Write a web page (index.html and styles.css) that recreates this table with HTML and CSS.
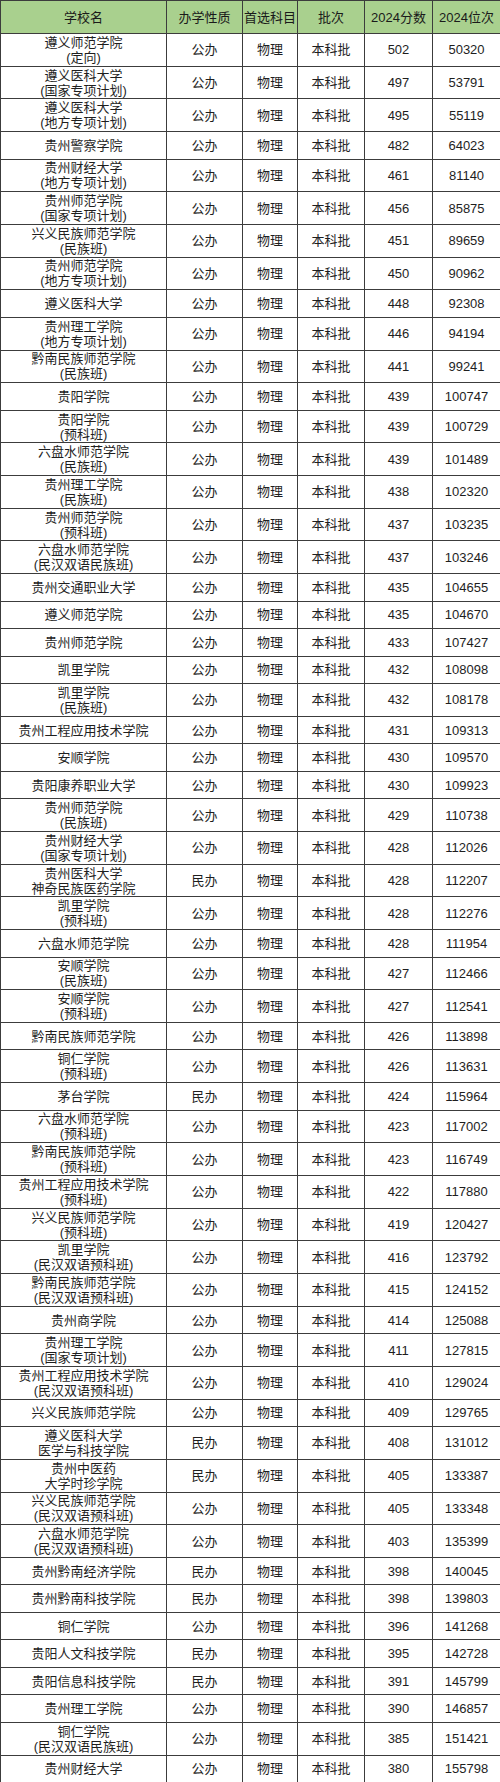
FILE: index.html
```html
<!DOCTYPE html>
<html lang="zh-CN">
<head>
<meta charset="utf-8">
<title>贵州本科批物理类院校分数位次</title>
<link rel="stylesheet" href="styles.css">
</head>
<body>
<table class="score-table">
<colgroup>
<col class="c-name"><col class="c-type"><col class="c-subj"><col class="c-batch"><col class="c-score"><col class="c-rank">
</colgroup>
<thead>
<tr class="head"><th>学校名</th><th>办学性质</th><th>首选科目</th><th>批次</th><th>2024分数</th><th>2024位次</th></tr>
</thead>
<tbody>
<tr class="d"><td>遵义师范学院<br>(定向)</td><td>公办</td><td>物理</td><td>本科批</td><td>502</td><td>50320</td></tr>
<tr class="d"><td>遵义医科大学<br>(国家专项计划)</td><td>公办</td><td>物理</td><td>本科批</td><td>497</td><td>53791</td></tr>
<tr class="d"><td>遵义医科大学<br>(地方专项计划)</td><td>公办</td><td>物理</td><td>本科批</td><td>495</td><td>55119</td></tr>
<tr class="s"><td>贵州警察学院</td><td>公办</td><td>物理</td><td>本科批</td><td>482</td><td>64023</td></tr>
<tr class="d"><td>贵州财经大学<br>(地方专项计划)</td><td>公办</td><td>物理</td><td>本科批</td><td>461</td><td>81140</td></tr>
<tr class="d"><td>贵州师范学院<br>(国家专项计划)</td><td>公办</td><td>物理</td><td>本科批</td><td>456</td><td>85875</td></tr>
<tr class="d"><td>兴义民族师范学院<br>(民族班)</td><td>公办</td><td>物理</td><td>本科批</td><td>451</td><td>89659</td></tr>
<tr class="d"><td>贵州师范学院<br>(地方专项计划)</td><td>公办</td><td>物理</td><td>本科批</td><td>450</td><td>90962</td></tr>
<tr class="s"><td>遵义医科大学</td><td>公办</td><td>物理</td><td>本科批</td><td>448</td><td>92308</td></tr>
<tr class="d"><td>贵州理工学院<br>(地方专项计划)</td><td>公办</td><td>物理</td><td>本科批</td><td>446</td><td>94194</td></tr>
<tr class="d"><td>黔南民族师范学院<br>(民族班)</td><td>公办</td><td>物理</td><td>本科批</td><td>441</td><td>99241</td></tr>
<tr class="s"><td>贵阳学院</td><td>公办</td><td>物理</td><td>本科批</td><td>439</td><td>100747</td></tr>
<tr class="d"><td>贵阳学院<br>(预科班)</td><td>公办</td><td>物理</td><td>本科批</td><td>439</td><td>100729</td></tr>
<tr class="d"><td>六盘水师范学院<br>(民族班)</td><td>公办</td><td>物理</td><td>本科批</td><td>439</td><td>101489</td></tr>
<tr class="d"><td>贵州理工学院<br>(民族班)</td><td>公办</td><td>物理</td><td>本科批</td><td>438</td><td>102320</td></tr>
<tr class="d"><td>贵州师范学院<br>(预科班)</td><td>公办</td><td>物理</td><td>本科批</td><td>437</td><td>103235</td></tr>
<tr class="d"><td>六盘水师范学院<br>(民汉双语民族班)</td><td>公办</td><td>物理</td><td>本科批</td><td>437</td><td>103246</td></tr>
<tr class="s"><td>贵州交通职业大学</td><td>公办</td><td>物理</td><td>本科批</td><td>435</td><td>104655</td></tr>
<tr class="s"><td>遵义师范学院</td><td>公办</td><td>物理</td><td>本科批</td><td>435</td><td>104670</td></tr>
<tr class="s"><td>贵州师范学院</td><td>公办</td><td>物理</td><td>本科批</td><td>433</td><td>107427</td></tr>
<tr class="s"><td>凯里学院</td><td>公办</td><td>物理</td><td>本科批</td><td>432</td><td>108098</td></tr>
<tr class="d"><td>凯里学院<br>(民族班)</td><td>公办</td><td>物理</td><td>本科批</td><td>432</td><td>108178</td></tr>
<tr class="s"><td>贵州工程应用技术学院</td><td>公办</td><td>物理</td><td>本科批</td><td>431</td><td>109313</td></tr>
<tr class="s"><td>安顺学院</td><td>公办</td><td>物理</td><td>本科批</td><td>430</td><td>109570</td></tr>
<tr class="s"><td>贵阳康养职业大学</td><td>公办</td><td>物理</td><td>本科批</td><td>430</td><td>109923</td></tr>
<tr class="d"><td>贵州师范学院<br>(民族班)</td><td>公办</td><td>物理</td><td>本科批</td><td>429</td><td>110738</td></tr>
<tr class="d"><td>贵州财经大学<br>(国家专项计划)</td><td>公办</td><td>物理</td><td>本科批</td><td>428</td><td>112026</td></tr>
<tr class="d"><td>贵州医科大学<br>神奇民族医药学院</td><td>民办</td><td>物理</td><td>本科批</td><td>428</td><td>112207</td></tr>
<tr class="d"><td>凯里学院<br>(预科班)</td><td>公办</td><td>物理</td><td>本科批</td><td>428</td><td>112276</td></tr>
<tr class="s"><td>六盘水师范学院</td><td>公办</td><td>物理</td><td>本科批</td><td>428</td><td>111954</td></tr>
<tr class="d"><td>安顺学院<br>(民族班)</td><td>公办</td><td>物理</td><td>本科批</td><td>427</td><td>112466</td></tr>
<tr class="d"><td>安顺学院<br>(预科班)</td><td>公办</td><td>物理</td><td>本科批</td><td>427</td><td>112541</td></tr>
<tr class="s"><td>黔南民族师范学院</td><td>公办</td><td>物理</td><td>本科批</td><td>426</td><td>113898</td></tr>
<tr class="d"><td>铜仁学院<br>(预科班)</td><td>公办</td><td>物理</td><td>本科批</td><td>426</td><td>113631</td></tr>
<tr class="s"><td>茅台学院</td><td>民办</td><td>物理</td><td>本科批</td><td>424</td><td>115964</td></tr>
<tr class="d"><td>六盘水师范学院<br>(预科班)</td><td>公办</td><td>物理</td><td>本科批</td><td>423</td><td>117002</td></tr>
<tr class="d"><td>黔南民族师范学院<br>(预科班)</td><td>公办</td><td>物理</td><td>本科批</td><td>423</td><td>116749</td></tr>
<tr class="d"><td>贵州工程应用技术学院<br>(预科班)</td><td>公办</td><td>物理</td><td>本科批</td><td>422</td><td>117880</td></tr>
<tr class="d"><td>兴义民族师范学院<br>(预科班)</td><td>公办</td><td>物理</td><td>本科批</td><td>419</td><td>120427</td></tr>
<tr class="d"><td>凯里学院<br>(民汉双语预科班)</td><td>公办</td><td>物理</td><td>本科批</td><td>416</td><td>123792</td></tr>
<tr class="d"><td>黔南民族师范学院<br>(民汉双语预科班)</td><td>公办</td><td>物理</td><td>本科批</td><td>415</td><td>124152</td></tr>
<tr class="s"><td>贵州商学院</td><td>公办</td><td>物理</td><td>本科批</td><td>414</td><td>125088</td></tr>
<tr class="d"><td>贵州理工学院<br>(国家专项计划)</td><td>公办</td><td>物理</td><td>本科批</td><td>411</td><td>127815</td></tr>
<tr class="d"><td>贵州工程应用技术学院<br>(民汉双语预科班)</td><td>公办</td><td>物理</td><td>本科批</td><td>410</td><td>129024</td></tr>
<tr class="s"><td>兴义民族师范学院</td><td>公办</td><td>物理</td><td>本科批</td><td>409</td><td>129765</td></tr>
<tr class="d"><td>遵义医科大学<br>医学与科技学院</td><td>民办</td><td>物理</td><td>本科批</td><td>408</td><td>131012</td></tr>
<tr class="d"><td>贵州中医药<br>大学时珍学院</td><td>民办</td><td>物理</td><td>本科批</td><td>405</td><td>133387</td></tr>
<tr class="d"><td>兴义民族师范学院<br>(民汉双语预科班)</td><td>公办</td><td>物理</td><td>本科批</td><td>405</td><td>133348</td></tr>
<tr class="d"><td>六盘水师范学院<br>(民汉双语预科班)</td><td>公办</td><td>物理</td><td>本科批</td><td>403</td><td>135399</td></tr>
<tr class="s"><td>贵州黔南经济学院</td><td>民办</td><td>物理</td><td>本科批</td><td>398</td><td>140045</td></tr>
<tr class="s"><td>贵州黔南科技学院</td><td>民办</td><td>物理</td><td>本科批</td><td>398</td><td>139803</td></tr>
<tr class="s"><td>铜仁学院</td><td>公办</td><td>物理</td><td>本科批</td><td>396</td><td>141268</td></tr>
<tr class="s"><td>贵阳人文科技学院</td><td>民办</td><td>物理</td><td>本科批</td><td>395</td><td>142728</td></tr>
<tr class="s"><td>贵阳信息科技学院</td><td>民办</td><td>物理</td><td>本科批</td><td>391</td><td>145799</td></tr>
<tr class="s"><td>贵州理工学院</td><td>公办</td><td>物理</td><td>本科批</td><td>390</td><td>146857</td></tr>
<tr class="d"><td>铜仁学院<br>(民汉双语民族班)</td><td>公办</td><td>物理</td><td>本科批</td><td>385</td><td>151421</td></tr>
<tr class="s"><td>贵州财经大学</td><td>公办</td><td>物理</td><td>本科批</td><td>380</td><td>155798</td></tr>
</tbody>
</table>
</body>
</html>
```

FILE: styles.css
```css
html, body {
  margin: 0;
  padding: 0;
  background: #ffffff;
}

.score-table {
  width: 500px;
  table-layout: fixed;
  border-collapse: collapse;
  font-family: "Liberation Sans", "Noto Sans CJK SC", sans-serif;
  font-size: 13px;
  line-height: 15px;
  color: #1e1e1e;
}

.c-name { width: 166px; }
.c-type { width: 76px; }
.c-subj { width: 55px; }
.c-batch { width: 67px; }
.c-score { width: 68px; }
.c-rank { width: 68px; }

.score-table th,
.score-table td {
  border: 1px solid #3c3c3c;
  padding: 0;
  text-align: center;
  vertical-align: middle;
  font-weight: normal;
  white-space: nowrap;
}

.score-table th {
  background: #a9d08e;
  color: #1a1a1a;
}

.head { height: 33px; }
.s { height: 27.5px; }
.d { height: 32.7px; }
```
